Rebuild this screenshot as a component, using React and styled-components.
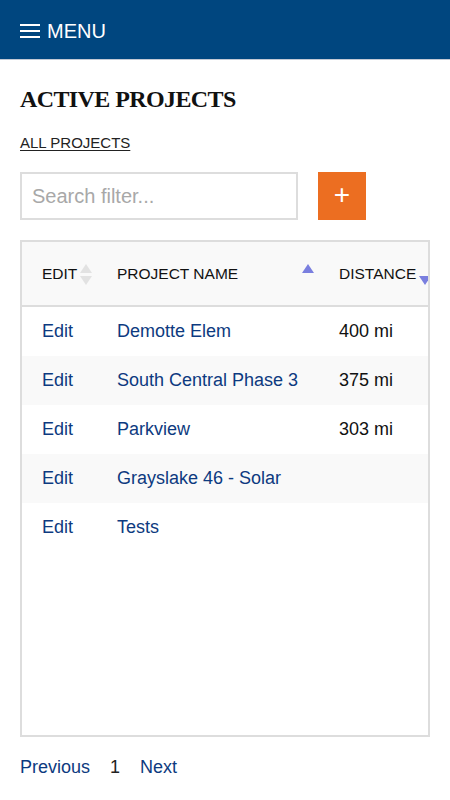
import React from "react";
import styled, { createGlobalStyle } from "styled-components";

const GlobalStyle = createGlobalStyle`
  body {
    margin: 0;
    background: #fff;
    font-family: "Liberation Sans", Arial, sans-serif;
    color: #111;
  }
`;

const TopBar = styled.header`
  height: 60px;
  background: #00467f;
  border-bottom: 1px solid #c3c9d4;
  display: flex;
  align-items: center;
  padding: 3px 20px 0;
  box-sizing: border-box;
`;

const MenuButton = styled.button`
  display: flex;
  align-items: center;
  gap: 7px;
  background: none;
  border: 0;
  padding: 0;
  color: #fff;
  font-family: inherit;
  font-size: 20px;
  line-height: 24px;
  cursor: pointer;
`;

const Main = styled.main`
  padding: 0 20px;
`;

const Title = styled.h1`
  margin: 25px 0 0;
  font-family: "Liberation Serif", "Times New Roman", serif;
  font-weight: bold;
  font-size: 24px;
  letter-spacing: -0.6px;
  line-height: 29px;
`;

const AllLink = styled.a`
  display: inline-block;
  margin-top: 20px;
  font-size: 15px;
  line-height: 18px;
  color: #222;
  text-decoration: underline;
  text-underline-offset: 2px;
`;

const Toolbar = styled.div`
  display: flex;
  gap: 20px;
  margin-top: 20px;
`;

const Search = styled.input`
  width: 278px;
  height: 48px;
  box-sizing: border-box;
  border: 2px solid #ddd;
  padding: 0 10px;
  font-family: inherit;
  font-size: 20px;
  outline: none;
  &::placeholder {
    color: #a8a8a8;
  }
`;

const AddButton = styled.button`
  width: 48px;
  height: 48px;
  border: 0;
  background: #ec6e21;
  color: #fff;
  font-family: inherit;
  font-size: 28px;
  line-height: 1;
  padding: 0 0 3px;
  cursor: pointer;
`;

const TableBox = styled.div`
  margin-top: 20px;
  width: 410px;
  height: 497px;
  box-sizing: border-box;
  border: 2px solid #ddd;
  overflow: hidden;
`;

const Table = styled.table`
  width: 414px;
  border-collapse: collapse;
  table-layout: fixed;
`;

const Th = styled.th`
  position: relative;
  width: ${(p) => p.$w}px;
  height: 64px;
  padding: 0 0 0 20px;
  box-sizing: border-box;
  text-align: left;
  font-size: 15.5px;
  font-weight: normal;
  color: #111;
  background: #f9f9f9;
  border-bottom: 2px solid #ddd;
  white-space: nowrap;
`;

const SortIcons = styled.span`
  position: absolute;
  right: 5px;
  top: 22px;
  display: flex;
  flex-direction: column;
  gap: 3px;
`;

const Arrow = styled.span`
  width: 0;
  height: 0;
  border-left: 6px solid transparent;
  border-right: 6px solid transparent;
  ${(p) =>
    p.$down
      ? `border-top: 9px solid ${p.$color};`
      : `border-bottom: 9px solid ${p.$color};`}
  visibility: ${(p) => (p.$hidden ? "hidden" : "visible")};
`;

const Tr = styled.tr`
  background: ${(p) => (p.$odd ? "#f9f9f9" : "#fff")};
`;

const Td = styled.td`
  height: 49px;
  padding: 0 0 0 20px;
  font-size: 18px;
  white-space: nowrap;
  overflow: hidden;
  color: #111;
`;

const Link = styled.a`
  color: #0d3a80;
  text-decoration: none;
`;

const Pager = styled.nav`
  display: flex;
  gap: 20px;
  margin-top: 19px;
  font-size: 18px;
  line-height: 22px;
`;

const Current = styled.span`
  color: #222;
`;

const Hamburger = () => (
  <svg width="20" height="16" viewBox="0 0 20 16">
    <rect x="0" y="1" width="20" height="2" fill="#fff" />
    <rect x="0" y="7" width="20" height="2" fill="#fff" />
    <rect x="0" y="13" width="20" height="2" fill="#fff" />
  </svg>
);

const rows = [
  { name: "Demotte Elem", distance: "400 mi" },
  { name: "South Central Phase 3", distance: "375 mi" },
  { name: "Parkview", distance: "303 mi" },
  { name: "Grayslake 46 - Solar", distance: "" },
  { name: "Tests", distance: "" },
];

const Sort = ({ up, down }) => (
  <SortIcons>
    <Arrow $color={up || "#fff"} $hidden={!up} />
    <Arrow $down $color={down || "#fff"} $hidden={!down} />
  </SortIcons>
);

export default function App() {
  return (
    <>
      <GlobalStyle />
      <TopBar>
        <MenuButton>
          <Hamburger />
          MENU
        </MenuButton>
      </TopBar>
      <Main>
        <Title>ACTIVE PROJECTS</Title>
        <AllLink href="#">ALL PROJECTS</AllLink>
        <Toolbar>
          <Search placeholder="Search filter..." />
          <AddButton>+</AddButton>
        </Toolbar>
        <TableBox>
          <Table>
            <thead>
              <tr>
                <Th $w={75}>
                  EDIT
                  <Sort up="#e2e2e2" down="#e2e2e2" />
                </Th>
                <Th $w={222}>
                  PROJECT NAME
                  <Sort up="#7a7fdf" />
                </Th>
                <Th $w={117}>
                  DISTANCE
                  <Sort down="#7a7fdf" />
                </Th>
              </tr>
            </thead>
            <tbody>
              {rows.map((r, i) => (
                <Tr key={r.name} $odd={i % 2 === 1}>
                  <Td>
                    <Link href="#">Edit</Link>
                  </Td>
                  <Td>
                    <Link href="#">{r.name}</Link>
                  </Td>
                  <Td>{r.distance}</Td>
                </Tr>
              ))}
            </tbody>
          </Table>
        </TableBox>
        <Pager>
          <Link href="#">Previous</Link>
          <Current>1</Current>
          <Link href="#">Next</Link>
        </Pager>
      </Main>
    </>
  );
}
